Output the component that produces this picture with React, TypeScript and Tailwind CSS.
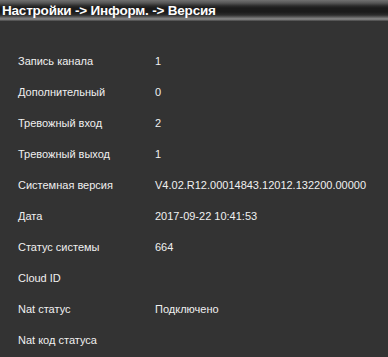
const rows: [string, string][] = [
  ["Запись канала", "1"],
  ["Дополнительный", "0"],
  ["Тревожный вход", "2"],
  ["Тревожный выход", "1"],
  ["Системная версия", "V4.02.R12.00014843.12012.132200.00000"],
  ["Дата", "2017-09-22 10:41:53"],
  ["Статус системы", "664"],
  ["Cloud ID", ""],
  ["Nat статус", "Подключено"],
  ["Nat код статуса", ""],
];

export default function App() {
  return (
    <div className="w-[388px] h-[357px] bg-[#333333] overflow-hidden font-['Liberation_Sans',sans-serif]">
      {/* title bar */}
      <div className="h-[21px] bg-[linear-gradient(to_bottom,#707070_0px,#555555_3px,#2a2a2a_6px,#1b1b1b_8px,#1b1b1b_12px,#2c2c2c_15px,#5a5a5a_17px,#8a8a8a_19px,#444444_21px)] pl-[2px] flex items-center">
        <span className="text-white font-bold text-[13.5px] leading-none tracking-[-0.2px]">
          Настройки -&gt; Информ. -&gt; Версия
        </span>
      </div>

      <div className="pt-[25px]">
        {rows.map(([label, value]) => (
          <div key={label} className="h-[31px] flex items-center text-[11px] text-[#f0f0f0]">
            <span className="w-[155px] pl-[18px]">{label}</span>
            <span>{value}</span>
          </div>
        ))}
      </div>
    </div>
  );
}
